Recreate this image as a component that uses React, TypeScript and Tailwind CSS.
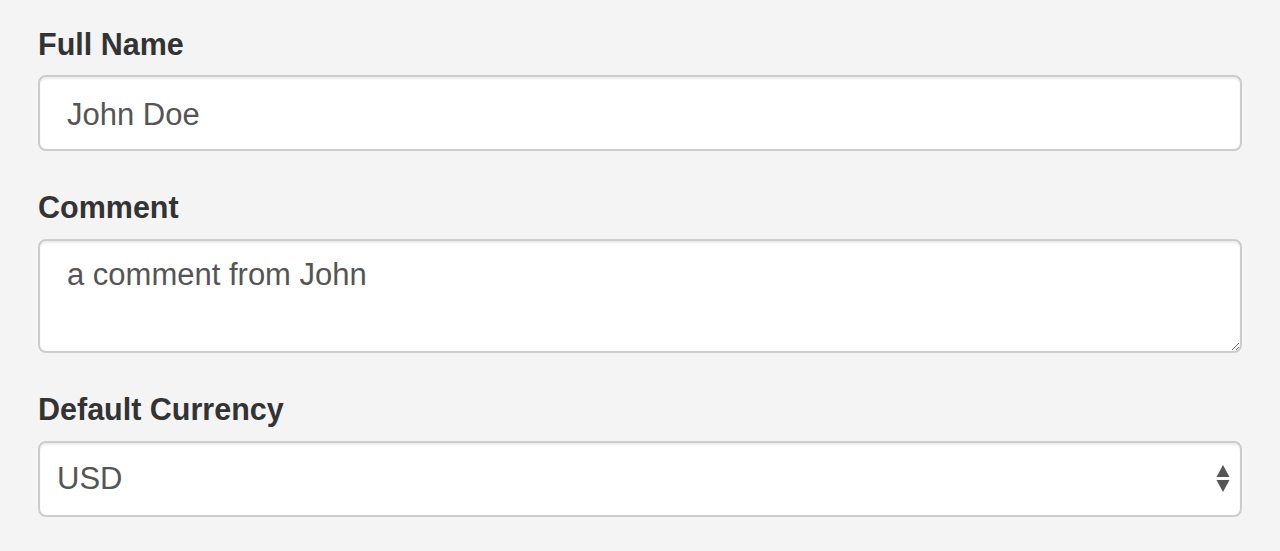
import { useState } from "react"

const labelCls =
  "block text-[30.5px] leading-[40px] font-bold text-[#333]"
const fieldCls =
  "block w-full bg-white border-2 border-[#ccc] rounded-[8px] text-[31px] text-[#555] shadow-[inset_0_2px_2px_rgba(0,0,0,0.075)] outline-none"

export default function App() {
  const [name, setName] = useState("John Doe")
  const [comment, setComment] = useState("a comment from John")
  const [currency, setCurrency] = useState("USD")

  return (
    <div
      className="min-h-[551px] bg-[#f4f4f4] px-[38px] pt-[24px]"
      style={{ fontFamily: '"Liberation Sans", Arial, sans-serif' }}
    >
      <form className="flex flex-col gap-[36px]">
        <div>
          <label className={`${labelCls} mb-[11px]`}>Full Name</label>
          <input
            type="text"
            value={name}
            onChange={(e) => setName(e.target.value)}
            className={`${fieldCls} h-[76px] px-[27px] pt-[4px]`}
          />
        </div>

        <div>
          <label className={`${labelCls} mb-[12px]`}>Comment</label>
          <textarea
            value={comment}
            onChange={(e) => setComment(e.target.value)}
            className={`${fieldCls} h-[114px] px-[27px] pt-[15px] leading-[1.2]`}
          />
        </div>

        <div>
          <label className={`${labelCls} mb-[12px]`}>Default Currency</label>
          <div className="relative">
            <select
              value={currency}
              onChange={(e) => setCurrency(e.target.value)}
              className={`${fieldCls} h-[76px] pl-[17px] pr-[50px] appearance-none`}
            >
              <option>USD</option>
              <option>EUR</option>
              <option>GBP</option>
            </select>
            {/* up/down arrows */}
            <svg
              className="absolute right-[12px] top-[24px] pointer-events-none"
              width="14"
              height="28"
              viewBox="0 0 14 28"
            >
              <path d="M7 0 L13.5 12 L0.5 12 Z" fill="#555" />
              <path d="M0.5 15 L13.5 15 L7 27 Z" fill="#555" />
            </svg>
          </div>
        </div>
      </form>
    </div>
  )
}
